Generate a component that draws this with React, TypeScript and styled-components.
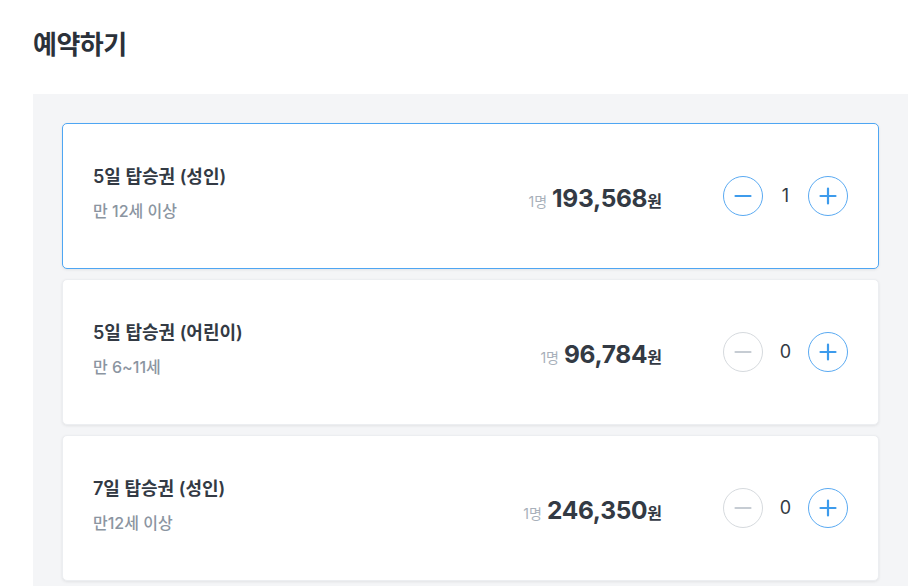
import React from "react";
import styled, { createGlobalStyle } from "styled-components";

const Global = createGlobalStyle`
  html, body { margin: 0; padding: 0; background: #ffffff; }
  body { font-family: Inter, "Noto Sans CJK KR", "Noto Sans", sans-serif; color: #333d4b; }
`;

const Page = styled.div`
  padding: 27px 8px 0 33px;
`;

const Title = styled.h1`
  margin: 0 0 32px 0;
  font-size: 26px;
  line-height: 35px;
  font-weight: 700;
  color: #2b313a;
  letter-spacing: -0.5px;
`;

const Panel = styled.div`
  background: #f4f5f7;
  padding: 29px 29px 40px 29px;
  display: flex;
  flex-direction: column;
  gap: 10px;
  min-height: 500px;
`;

const Card = styled.div<{ $active: boolean }>`
  height: 146px;
  box-sizing: border-box;
  background: #ffffff;
  border-radius: 5px;
  border: 1px solid ${(p) => (p.$active ? "#4ea6f3" : "#eceef1")};
  box-shadow: 0 1px 3px rgba(0, 0, 0, 0.08);
  display: flex;
  align-items: center;
  padding: 0 30px 0 30px;
`;

const Info = styled.div`
  flex: 1;
  display: flex;
  flex-direction: column;
  gap: 10px;
  margin-top: -6px;
`;

const Name = styled.div`
  font-size: 18px;
  line-height: 26px;
  font-weight: 600;
  color: #333a44;
`;

const Sub = styled.div`
  font-size: 16px;
  line-height: 23px;
  font-weight: 500;
  color: #8b95a1;
`;

const Price = styled.div`
  display: flex;
  align-items: baseline;
  margin-right: 61px;
  margin-top: 3px;
`;

const Unit = styled.span`
  font-size: 14px;
  color: #a8b0ba;
  margin-right: 5px;
`;

const Amount = styled.span`
  font-size: 24.5px;
  font-weight: 700;
  color: #333a44;
  letter-spacing: -0.3px;
`;

const Won = styled.span`
  font-size: 16px;
  font-weight: 600;
  color: #333a44;
`;

const Counter = styled.div`
  display: flex;
  align-items: center;
`;

const Round = styled.button<{ $on: boolean }>`
  width: 40px;
  height: 40px;
  border-radius: 50%;
  box-sizing: border-box;
  background: #ffffff;
  border: 1px solid ${(p) => (p.$on ? "#5aaaf2" : "#d6dade")};
  color: ${(p) => (p.$on ? "#3d9bec" : "#c6ccd3")};
  display: flex;
  align-items: center;
  justify-content: center;
  padding: 0;
  cursor: pointer;
`;

const Count = styled.span`
  width: 45px;
  text-align: center;
  font-size: 18px;
  color: #333a44;
  margin-top: -2px;
`;

const Minus = () => (
  <svg width="18" height="18" viewBox="0 0 18 18">
    <path d="M1.5 9h15" stroke="currentColor" strokeWidth="2.2" strokeLinecap="round" />
  </svg>
);
const Plus = () => (
  <svg width="18" height="18" viewBox="0 0 18 18">
    <path d="M1.5 9h15M9 1.5v15" stroke="currentColor" strokeWidth="2.2" strokeLinecap="round" />
  </svg>
);

const items = [
  { name: "5일 탑승권 (성인)", sub: "만 12세 이상", price: "193,568", count: 1 },
  { name: "5일 탑승권 (어린이)", sub: "만 6~11세", price: "96,784", count: 0 },
  { name: "7일 탑승권 (성인)", sub: "만12세 이상", price: "246,350", count: 0 },
];

export default function App() {
  return (
    <>
      <Global />
      <Page>
        <Title>예약하기</Title>
        <Panel>
          {items.map((it) => (
            <Card key={it.name} $active={it.count > 0}>
              <Info>
                <Name>{it.name}</Name>
                <Sub>{it.sub}</Sub>
              </Info>
              <Price>
                <Unit>1명</Unit>
                <Amount>{it.price}</Amount>
                <Won>원</Won>
              </Price>
              <Counter>
                <Round $on={it.count > 0} aria-label="minus">
                  <Minus />
                </Round>
                <Count>{it.count}</Count>
                <Round $on aria-label="plus">
                  <Plus />
                </Round>
              </Counter>
            </Card>
          ))}
        </Panel>
      </Page>
    </>
  );
}
